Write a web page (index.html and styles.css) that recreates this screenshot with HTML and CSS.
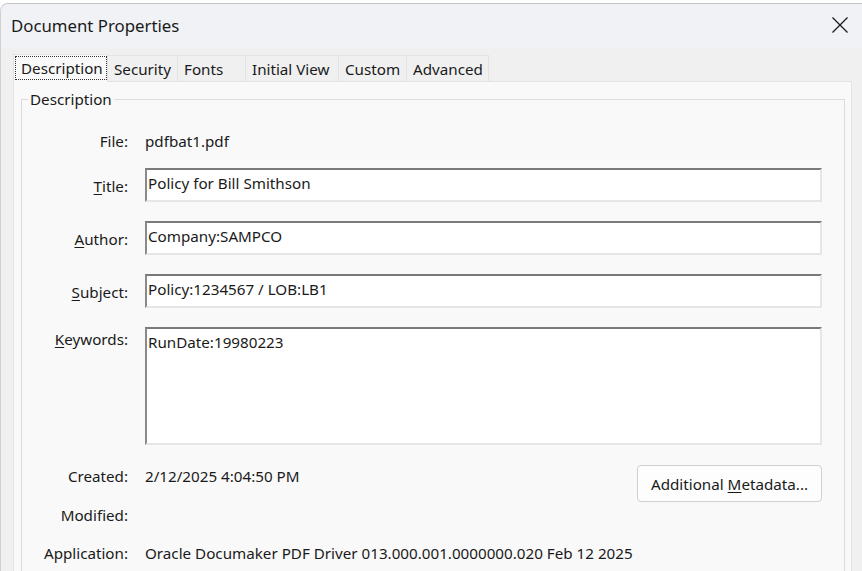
FILE: index.html
```html
<!DOCTYPE html>
<html>
<head>
<meta charset="utf-8">
<link rel="stylesheet" href="styles.css">
</head>
<body>
<div class="window">
  <div class="titlebar">
    <span class="title">Document Properties</span>
    <svg class="close" width="18" height="18" viewBox="0 0 18 18"><path d="M1.5 1.5 L16.5 16.5 M16.5 1.5 L1.5 16.5" stroke="#1a1a1a" stroke-width="1.3" fill="none"/></svg>
  </div>
  <div class="client">
    <div class="tabs">
      <div class="tab active"><span class="focus">Description</span></div>
      <div class="tab t-sec">Security</div>
      <div class="tab t-fonts">Fonts</div>
      <div class="tab t-iv">Initial View</div>
      <div class="tab t-cus">Custom</div>
      <div class="tab t-adv">Advanced</div>
    </div>
    <div class="panel">
      <div class="group">
        <div class="legend">Description</div>
        <div class="rows">
          <div class="row r-file"><div class="lbl">File:</div><div class="val">pdfbat1.pdf</div></div>
          <div class="row r-input"><div class="lbl"><u>T</u>itle:</div><div class="box">Policy for Bill Smithson</div></div>
          <div class="row r-input"><div class="lbl"><u>A</u>uthor:</div><div class="box">Company:SAMPCO</div></div>
          <div class="row r-input"><div class="lbl"><u>S</u>ubject:</div><div class="box">Policy:1234567 / LOB:LB1</div></div>
          <div class="row r-kw"><div class="lbl"><u>K</u>eywords:</div><div class="box tall">RunDate:19980223</div></div>
          <div class="row r-created"><div class="lbl">Created:</div><div class="val flexval"><span class="cdate">2/12/2025 4:04:50 PM</span><div class="btn"><span>Additional <u>M</u>etadata...</span></div></div></div>
          <div class="row r-mod"><div class="lbl">Modified:</div><div class="val"></div></div>
          <div class="row r-app"><div class="lbl">Application:</div><div class="val">Oracle Documaker PDF Driver 013.000.001.0000000.020 Feb 12 2025</div></div>
        </div>
      </div>
    </div>
  </div>
</div>
</body>
</html>
```
FILE: styles.css
```css
html, body {
  margin: 0;
  padding: 0;
  background: #ffffff;
  width: 862px;
  height: 571px;
  overflow: hidden;
  font-family: "Noto Sans", "Open Sans", sans-serif;
  color: #1a1a1a;
}
.window {
  margin-top: 3px;
  height: 568px;
  border-top: 1px solid #c4c4c4;
  border-left: 1px solid #d0d0d0;
  border-top-left-radius: 8px;
  background: #f0f0f0;
  overflow: hidden;
  display: flex;
  flex-direction: column;
}
.titlebar {
  height: 44px;
  flex: none;
  background: #f0f2f6;
  display: flex;
  align-items: center;
  justify-content: space-between;
  padding-left: 10px;
  padding-right: 13px;
}
.title {
  font-size: 16.8px;
  color: #1a1a1a;
  position: relative;
  top: -1px;
}
.close { position: relative; top: -1px; }
.client {
  flex: 1;
  background: #f0f0f0;
  padding: 6px 10px 0 12px;
  display: flex;
  flex-direction: column;
}
.tabs {
  display: flex;
  height: 27px;
  font-size: 15.2px;
}
.tab {
  box-sizing: border-box;
  height: 26px;
  margin-top: 1px;
  border: 1px solid #e3e3e3;
  border-bottom: none;
  display: flex;
  align-items: center;
  padding: 0 0 0 6px;
  background: #f0f0f0;
  margin-left: -1px;
  white-space: nowrap;
}
.tab.active {
  margin-top: 0;
  height: 28px;
  width: 95px;
  background: #f9f9f9;
  padding: 0 0 0 1px;
  margin-left: 0;
  z-index: 2;
  margin-bottom: -1px;
  align-items: flex-start;
}
.focus {
  box-sizing: border-box;
  width: 92px;
  border: 1px dotted #333;
  padding: 0 0 0 5px;
  margin-top: 1px;
  height: 24px;
  line-height: 22px;
}
.t-sec { width: 71px; }
.t-fonts { width: 69px; }
.t-iv { width: 94px; }
.t-cus { width: 69px; }
.t-adv { width: 83px; }
.panel {
  flex: 1;
  background: #f9f9f9;
  border: 1px solid #e3e3e3;
  border-bottom: none;
  padding: 17px 6px 0 7px;
}
.group {
  border: 1px solid #dcdcdc;
  border-bottom: none;
  height: 500px;
  position: relative;
}
.legend {
  position: absolute;
  top: -11px;
  left: 6px;
  background: #f9f9f9;
  padding: 0 2px;
  font-size: 15.2px;
  line-height: 20px;
}
.rows {
  padding-top: 30px;
  font-size: 15.2px;
}
.row {
  display: grid;
  grid-template-columns: 106px 677px;
  column-gap: 17px;
}
.lbl {
  text-align: right;
  line-height: 22px;
  white-space: nowrap;
}
.lbl u, .btn u { text-decoration-thickness: 1px; text-underline-offset: 2px; }
.val { line-height: 22px; white-space: nowrap; }
.r-file { height: 22px; }
.r-input { margin-top: 16px; height: 34px; }
.r-input .lbl { padding-top: 7px; }
.r-input + .r-input { margin-top: 19px; }
.r-kw { margin-top: 19px; height: 118px; }
.r-kw .lbl { padding-top: 1px; }
.box {
  box-sizing: border-box;
  height: 34px;
  background: #ffffff;
  border-top: 2px solid #7a7a7a;
  border-left: 2px solid #8a8a8a;
  border-right: 2px solid #e6e6e6;
  border-bottom: 2px solid #e6e6e6;
  padding: 2px 0 0 1px;
  line-height: 22px;
  white-space: nowrap;
}
.box.tall { height: 118px; }
.r-created { margin-top: 20px; height: 37px; }
.flexval {
  display: flex;
  justify-content: space-between;
  align-items: flex-start;
}
.btn {
  width: 185px;
  height: 37px;
  box-sizing: border-box;
  border: 1px solid #d0d0d0;
  border-radius: 4px;
  background: #fdfdfd;
  display: flex;
  align-items: center;
  justify-content: center;
  line-height: 22px;
  padding-top: 1px;
}
.r-mod { margin-top: 2px; }
.r-app { margin-top: 16px; }
```
